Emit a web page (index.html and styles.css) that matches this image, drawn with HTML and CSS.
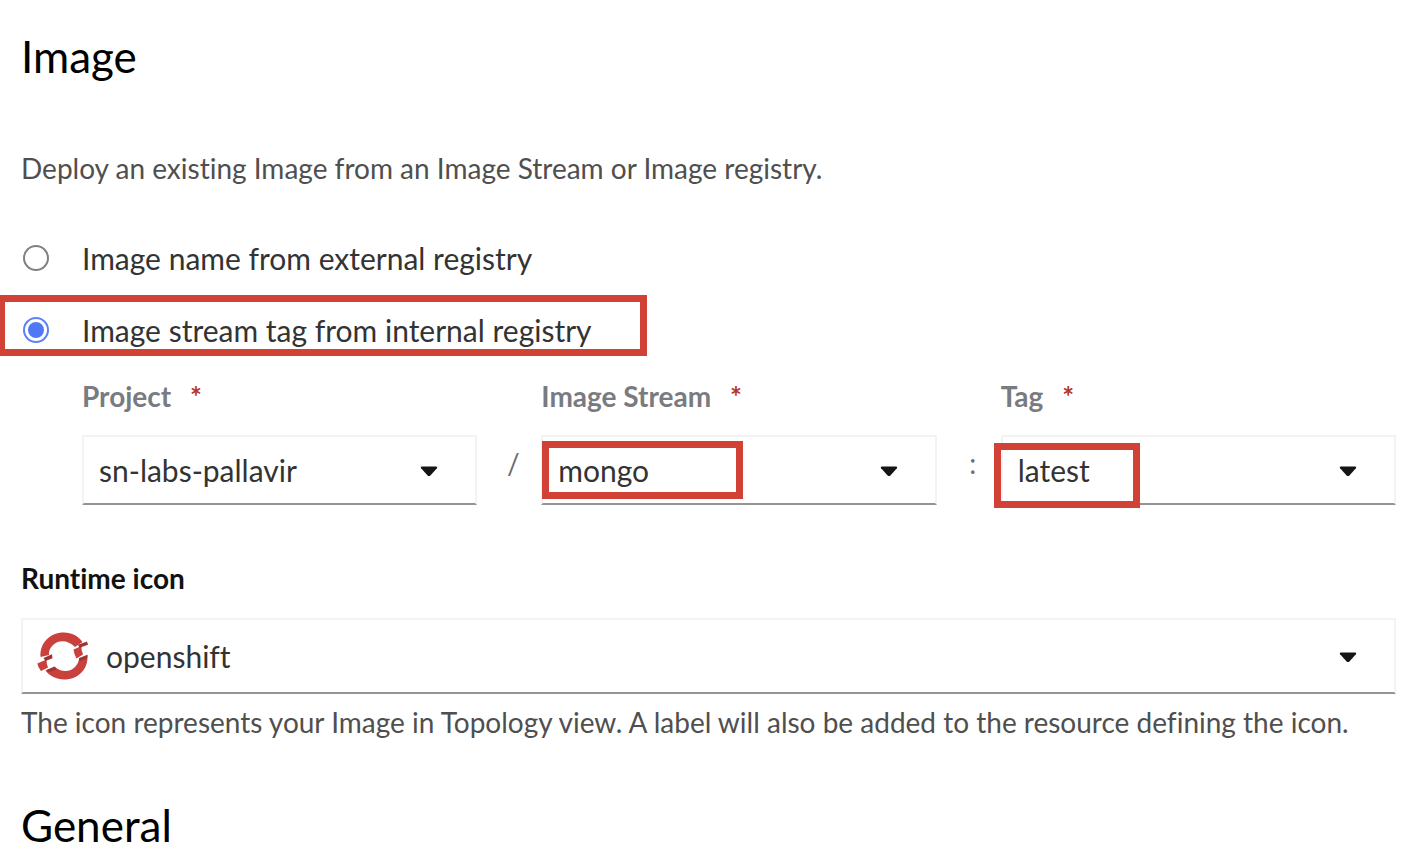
FILE: index.html
```html
<!DOCTYPE html>
<html lang="en">
<head>
<meta charset="utf-8">
<meta name="viewport" content="width=device-width, initial-scale=1">
<title>Deploy Image</title>
<link rel="stylesheet" href="styles.css">
</head>
<body>
<form class="page">
  <h2 class="title">Image</h2>
  <p class="intro">Deploy an existing Image from an Image Stream or Image registry.</p>

  <div class="option">
    <input class="radio" type="radio" name="source" id="external">
    <label class="option-label" for="external">Image name from external registry</label>
  </div>
  <div class="option">
    <input class="radio" type="radio" name="source" id="internal" checked>
    <label class="option-label" for="internal">Image stream tag from internal registry</label>
    <span class="mark mark-option"></span>
  </div>

  <div class="stream">
    <div class="field">
      <label class="field-label" for="project">Project <span class="required">*</span></label>
      <div class="control">
        <select class="select" id="project"><option>sn-labs-pallavir</option></select>
        <svg class="caret" viewBox="0 0 18 11"><path d="M1.8.5h14.4q1.8.2.7 1.8L10.4 9.400Q9 10.800 7.600 9.400L1.100 2.300Q0 .7 1.800.5z"/></svg>
      </div>
    </div>
    <span class="separator">/</span>
    <div class="field">
      <label class="field-label" for="stream">Image Stream <span class="required">*</span></label>
      <div class="control">
        <select class="select" id="stream"><option>mongo</option></select>
        <svg class="caret" viewBox="0 0 18 11"><path d="M1.8.5h14.4q1.8.2.7 1.8L10.4 9.400Q9 10.800 7.600 9.400L1.100 2.300Q0 .7 1.800.5z"/></svg>
        <span class="mark mark-stream"></span>
      </div>
    </div>
    <span class="separator">:</span>
    <div class="field">
      <label class="field-label" for="tag">Tag <span class="required">*</span></label>
      <div class="control">
        <select class="select" id="tag"><option>latest</option></select>
        <svg class="caret" viewBox="0 0 18 11"><path d="M1.8.5h14.4q1.8.2.7 1.8L10.4 9.400Q9 10.800 7.600 9.400L1.100 2.300Q0 .7 1.800.5z"/></svg>
        <span class="mark mark-tag"></span>
      </div>
    </div>
  </div>

  <label class="runtime-label" for="runtime">Runtime icon</label>
  <div class="control">
    <select class="select select-icon" id="runtime"><option>openshift</option></select>
    <svg class="logo" viewBox="0 0 52 48">
      <path fill="#c9403d" d="M3.500 25C2.500 11 13 .5 27 .5 35 .5 41 4 45.500 10L38 15C31 7.500 21 7.500 15.500 13.500 12.500 17 11.500 20 12 23z"/>
      <path fill="#c9403d" d="M50.500 23C51.500 37 41.500 47.500 27 47.500 19.500 47.500 12.500 44 8.500 38.500L17.500 34.500C24 40.500 33 40.500 38.500 34.500 41 31.500 42 29 42 26z"/>
      <path fill="#c9403d" d="M36.500 17.500l8-3.500q-.5 4 1.500 8.500l-6.500 4q-2.500-4-3-9zM.3 31.500l9.200-4q0 5 1.500 8l-7 3.500q-3-3.500-3.700-7.500z"/>
      <path fill="#9b3634" d="M41 12.800l9-3.300 1 3.300-8.500 3zM42 26.500l8.500-3.800-.5 3.500-7.500 3zM6.500 26l8.500-3.800.5 4-7 2.800zM9.500 38l8.500-3.300 1 3-8 2.500z"/>
    </svg>
    <svg class="caret" viewBox="0 0 18 11"><path d="M1.8.5h14.4q1.8.2.7 1.8L10.4 9.400Q9 10.800 7.600 9.400L1.100 2.300Q0 .7 1.800.5z"/></svg>
  </div>
  <p class="helper">The icon represents your Image in Topology view. A label will also be added to the resource defining the icon.</p>

  <h2 class="title">General</h2>
</form>
</body>
</html>
```
FILE: styles.css
```css
* { box-sizing: border-box; }
body {
  margin: 0;
  background: #fff;
  color: #333;
  font-family: Lato, "Open Sans", sans-serif;
  font-weight: 400;
  font-variant-ligatures: none;
}
.page { padding: 26px 30px 0 21px; }
.title {
  margin: 0;
  color: #000;
  font-size: 44px;
  font-weight: 400;
  line-height: 60px;
}
.intro {
  margin: 62px 0 48px;
  color: #4f4f4f;
  font-size: 28px;
  line-height: 40px;
}
.option {
  position: relative;
  display: flex;
  align-items: center;
  gap: 33px;
  height: 44px;
  margin-bottom: 28px;
}
.radio {
  appearance: none;
  display: grid;
  place-items: center;
  width: 26px;
  height: 26px;
  margin: 0 0 0 2px;
  border: 2px solid #808080;
  border-radius: 50%;
}
.radio:checked { border-color: #5b82f8; }
.radio:checked::before {
  content: "";
  width: 16px;
  height: 16px;
  border-radius: 50%;
  background: #5078f6;
}
.option-label { font-size: 30px; }
.mark {
  position: absolute;
  border: 7px solid #d24135;
  pointer-events: none;
}
.mark-option { left: -21px; top: -13px; width: 647px; height: 61px; border-left-width: 5px; }
.mark-stream { left: 1px; top: 6px; width: 201px; height: 58px; }
.mark-tag { left: -7px; top: 8px; width: 146px; height: 65px; }
.stream {
  display: grid;
  grid-template-columns: 1fr 64px 1fr 64px 1fr;
  padding-left: 61px;
}
.field-label {
  display: block;
  margin: -2px 0 21px;
  color: #787b80;
  font-size: 28px;
  font-weight: 700;
  line-height: 36px;
}
.required { margin-left: 12px; color: #b5382a; }
.separator {
  align-self: end;
  padding-left: 8px;
  color: #6a6e73;
  font-size: 28px;
  line-height: 84px;
  text-align: center;
}
.control { position: relative; }
.select {
  display: block;
  appearance: none;
  width: 100%;
  height: 70px;
  padding: 0 64px 0 15px;
  border: 2px solid #f3f3f3;
  border-bottom-color: #939496;
  border-radius: 0;
  background: #fff;
  color: #333;
  font: inherit;
  font-size: 30px;
  font-variant-ligatures: none;
}
.select-icon { height: 76px; padding-left: 83px; }
.caret {
  position: absolute;
  top: 50%;
  right: 39px;
  width: 18px;
  height: 11px;
  margin-top: -4px;
  fill: #151515;
  pointer-events: none;
}
.logo {
  position: absolute;
  left: 16px;
  top: 14px;
  width: 52px;
  height: 48px;
  pointer-events: none;
}
.runtime-label {
  display: block;
  margin: 55px 0 22px;
  color: #111;
  font-size: 28px;
  font-weight: 700;
  line-height: 36px;
}
.helper {
  margin: 8px 0 53px;
  color: #4f4f4f;
  font-size: 28px;
  line-height: 40px;
}
```
